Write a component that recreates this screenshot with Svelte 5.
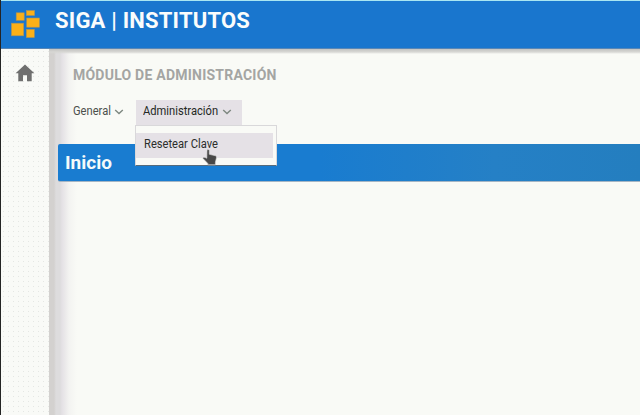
<script>
  const menus = [
    { label: 'General', open: false },
    { label: 'Administración', open: true, items: ['Resetear Clave'] }
  ];
</script>

<div class="app">
  <header>
    <svg class="logo" width="30" height="30" viewBox="0 0 30 30" aria-hidden="true">
      <g fill="#fbb018" stroke="#a9925a" stroke-width=".6">
        <rect x="5.2" y="2.8" width="8" height="7.5" />
        <rect x="15.3" y="0.5" width="8.3" height="5" />
        <rect x="0.4" y="13.2" width="12.3" height="12.6" />
        <rect x="15.7" y="8" width="12.7" height="9.2" />
        <rect x="15.3" y="19.3" width="8" height="8.3" />
      </g>
    </svg>
    <h1>SIGA | INSTITUTOS</h1>
  </header>
  <div class="body">
    <aside>
      <svg width="20" height="18" viewBox="0 0 20 18" aria-label="Inicio">
        <path fill="#6f6f6f" d="M8 17.2V11.3H12V17.2H16.7V9.2H19.4L10 .6 .6 9.2H3.3V17.2Z" />
      </svg>
    </aside>
    <main>
      <h2>MÓDULO DE ADMINISTRACIÓN</h2>
      <nav>
        {#each menus as menu}
          <div class="menu" class:open={menu.open}>
            <span class="label">{menu.label}</span>
            <svg class="chevron" width="10" height="6" viewBox="0 0 10 6"><path d="M1.2 1 5 4.6 8.8 1" /></svg>
            {#if menu.open}
              <div class="dropdown">
                {#each menu.items as item}
                  <div class="item"><span class="label">{item}</span></div>
                {/each}
              </div>
            {/if}
          </div>
        {/each}
      </nav>
      <section><h3>Inicio</h3></section>
    </main>
  </div>
  <svg class="cursor" width="16" height="17" viewBox="0 0 16 17" aria-hidden="true">
    <path fill="#484848" stroke="#dedede" stroke-width=".6" d="M5 .8Q6.4 0 7.3 1.2V5.3L13.6 6.8Q14.6 7.3 14.5 8.7L13.4 13.2V15.8H5.8V14.4L.8 9.3Q1.2 7.8 3.1 8.5L4.8 9.3Z" />
  </svg>
</div>

<style>
  :global(body) { margin: 0; overflow: hidden; }
  h1, h2, h3 { margin: 0; font-weight: 700; white-space: nowrap; }
  .app {
    position: relative;
    box-sizing: border-box;
    width: 640px;
    height: 415px;
    display: flex;
    flex-direction: column;
    overflow: hidden;
    background: #f9faf6;
    border-left: 1px solid #242424;
    font-family: Roboto, sans-serif;
  }
  header {
    box-sizing: border-box;
    flex: none;
    height: 49px;
    display: flex;
    align-items: flex-start;
    padding: 9px 0 0 10px;
    background: #1976ce;
    border-top: 1px solid #a9e6f2;
    border-bottom: 1px solid #5887b7;
  }
  .logo { flex: none; }
  h1 {
    margin: -2px 0 0 14px;
    font-size: 22px;
    line-height: 26px;
    letter-spacing: .2px;
    color: #fafcfc;
  }
  .body { flex: 1; display: flex; min-height: 0; }
  aside {
    flex: none;
    width: 48px;
    display: flex;
    justify-content: center;
    align-items: flex-start;
    background: radial-gradient(circle, #e5e7e4 .6px, transparent .8px) 0 0 / 5px 5px, #f9faf7;
  }
  aside svg { margin-top: 15px; }
  main {
    flex: 1;
    min-width: 0;
    display: flex;
    flex-direction: column;
    background:
      linear-gradient(#c3c3c1, #d7d7d4 3px, #f9faf600 5px) no-repeat,
      linear-gradient(90deg, #d3d1cf 0 5px, #dddcdd 7px 11px, #e4e1e5 13px, #f3f3f1 20px, #f9faf6 28px);
  }
  h2 {
    margin: 16px 0 0 24px;
    font-size: 14px;
    line-height: 20px;
    letter-spacing: .23px;
    color: #a4a5a3;
  }
  nav {
    display: flex;
    height: 25px;
    margin: 15px 0 19px 24px;
    font-size: 12px;
    color: #4c504c;
  }
  .menu {
    position: relative;
    box-sizing: border-box;
    flex: none;
    width: 63px;
    display: flex;
    align-items: center;
    justify-content: space-between;
    padding: 0 12px 3px 0;
  }
  .label {
    display: inline-block;
    white-space: nowrap;
    transform: scaleX(.93);
    transform-origin: left;
  }
  .menu > .label { margin-right: -6px; }
  .open {
    width: 106px;
    padding: 0 10px 3px 7px;
    background: #e5e1e6;
    color: #242824;
  }
  .chevron { flex: none; margin-top: 2px; fill: none; stroke: #7e8880; stroke-width: 1.4; }
  .dropdown {
    position: absolute;
    z-index: 2;
    top: 25px;
    left: -1px;
    box-sizing: border-box;
    width: 142px;
    height: 41px;
    padding: 7px 0;
    background: #f9faf6;
    border: 1px solid #d9d8da;
    border-bottom-color: #566b7c;
  }
  .item {
    height: 25px;
    margin-right: 3px;
    padding-left: 8px;
    line-height: 22px;
    background: #e5e1e6;
    color: #2b2e2c;
  }
  section {
    box-sizing: border-box;
    height: 38px;
    margin-left: 9px;
    padding: 8px 0 0 7px;
    border-radius: 2px 0 0 2px;
    border-bottom: 1px solid #a5b5c4;
    background: linear-gradient(90deg, #197cd0 0 45%, #2580c6 75%, #247ebf);
  }
  h3 { font-size: 19px; line-height: 22px; color: #f4fafa; }
  .cursor { position: absolute; z-index: 3; left: 201px; top: 149px; }
</style>
